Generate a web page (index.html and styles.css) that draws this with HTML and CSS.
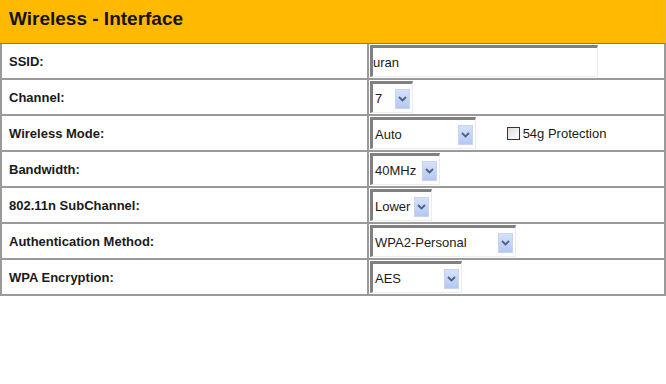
FILE: index.html
```html
<!DOCTYPE html>
<html lang="en">
<head>
    <meta charset="UTF-8">
    <title>Wireless - Interface</title>
    <link rel="stylesheet" href="styles.css">
</head>
<body>
    <div class="panel">
        <div class="panel-title">Wireless - Interface</div>
        <table class="settings">
            <tr>
                <td class="label">SSID:</td>
                <td class="field"><span class="textbox">uran</span></td>
            </tr>
            <tr>
                <td class="label">Channel:</td>
                <td class="field">
                    <span class="dropdown w-channel"><span class="value">7</span><span class="arrow"><svg width="9" height="6" viewBox="0 0 9 6"><path d="M1 1l3.5 3.5L8 1" fill="none" stroke="#4d6185" stroke-width="1.8"/></svg></span></span>
                </td>
            </tr>
            <tr>
                <td class="label">Wireless Mode:</td>
                <td class="field">
                    <span class="dropdown w-mode"><span class="value">Auto</span><span class="arrow"><svg width="9" height="6" viewBox="0 0 9 6"><path d="M1 1l3.5 3.5L8 1" fill="none" stroke="#4d6185" stroke-width="1.8"/></svg></span></span>
                    <label class="check"><span class="box"></span>54g Protection</label>
                </td>
            </tr>
            <tr>
                <td class="label">Bandwidth:</td>
                <td class="field">
                    <span class="dropdown w-band"><span class="value">40MHz</span><span class="arrow"><svg width="9" height="6" viewBox="0 0 9 6"><path d="M1 1l3.5 3.5L8 1" fill="none" stroke="#4d6185" stroke-width="1.8"/></svg></span></span>
                </td>
            </tr>
            <tr>
                <td class="label">802.11n SubChannel:</td>
                <td class="field">
                    <span class="dropdown w-sub"><span class="value">Lower</span><span class="arrow"><svg width="9" height="6" viewBox="0 0 9 6"><path d="M1 1l3.5 3.5L8 1" fill="none" stroke="#4d6185" stroke-width="1.8"/></svg></span></span>
                </td>
            </tr>
            <tr>
                <td class="label">Authentication Method:</td>
                <td class="field">
                    <span class="dropdown w-auth"><span class="value">WPA2-Personal</span><span class="arrow"><svg width="9" height="6" viewBox="0 0 9 6"><path d="M1 1l3.5 3.5L8 1" fill="none" stroke="#4d6185" stroke-width="1.8"/></svg></span></span>
                </td>
            </tr>
            <tr>
                <td class="label">WPA Encryption:</td>
                <td class="field">
                    <span class="dropdown w-enc"><span class="value">AES</span><span class="arrow"><svg width="9" height="6" viewBox="0 0 9 6"><path d="M1 1l3.5 3.5L8 1" fill="none" stroke="#4d6185" stroke-width="1.8"/></svg></span></span>
                </td>
            </tr>
        </table>
    </div>
</body>
</html>
```

FILE: styles.css
```css
body {
    margin: 0;
    background: #ffffff;
    font-family: "Liberation Sans", Arial, sans-serif;
    color: #1a1a1a;
}
.panel {
    width: 666px;
}
.panel-title {
    height: 44px;
    box-sizing: border-box;
    padding: 8px 0 0 9px;
    background: #ffb900;
    border-bottom: 1px solid #8a7a50;
    border-right: 1px solid #c8b890;
    font-size: 19px;
    font-weight: bold;
    color: #141414;
}
.settings {
    width: 666px;
    border-collapse: collapse;
}
.settings td {
    height: 34px;
    padding: 0;
    border: 2px solid #9a9a9a;
    border-top: 0;
}
.settings td.label {
    width: 358px;
    padding-left: 7px;
    font-size: 13px;
    font-weight: bold;
}
.settings td.field {
    padding-left: 1px;
    font-size: 13px;
    vertical-align: middle;
}
.textbox {
    display: flex;
    align-items: center;
    box-sizing: border-box;
    width: 228px;
    height: 32px;
    padding-left: 0;
    border-top: 3px solid #808080;
    border-left: 3px solid #808080;
    border-right: 1px solid #ececec;
    border-bottom: 1px solid #ececec;
}
.dropdown {
    display: inline-flex;
    align-items: center;
    justify-content: space-between;
    vertical-align: middle;
    box-sizing: border-box;
    height: 32px;
    padding: 0 2px 0 2px;
    border-top: 3px solid #808080;
    border-left: 3px solid #808080;
    border-right: 1px solid #ececec;
    border-bottom: 1px solid #ececec;
}
.arrow {
    display: flex;
    align-items: center;
    justify-content: center;
    width: 15px;
    height: 20px;
    margin-top: 2px;
    background: linear-gradient(#d6e2fb, #b4c8f1);
    border: 1px solid #c6d4ef;
    box-sizing: border-box;
}
.w-channel { width: 43px; }
.w-mode { width: 106px; }
.w-band { width: 70px; }
.w-sub { width: 62px; }
.w-auth { width: 146px; }
.w-enc { width: 92px; }
.check {
    display: inline-flex;
    align-items: center;
    gap: 3px;
    margin-left: 27px;
    vertical-align: middle;
    font-size: 13px;
}
.box {
    display: inline-block;
    width: 13px;
    height: 13px;
    box-sizing: border-box;
    border: 1px solid #1c3b5a;
    background: linear-gradient(135deg, #dcdcdc, #ffffff);
}
```
